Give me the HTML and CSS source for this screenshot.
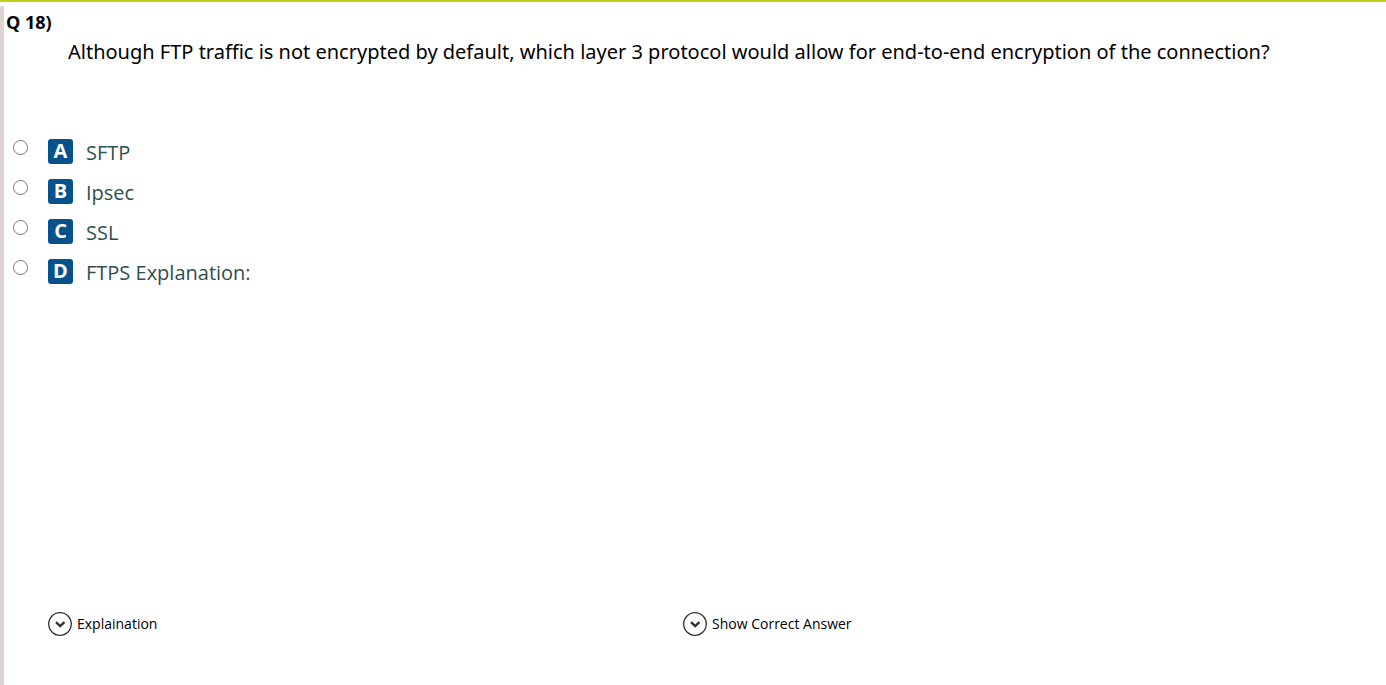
FILE: index.html
```
<!DOCTYPE html>
<html lang="en">
<head>
<meta charset="utf-8">
<meta name="viewport" content="width=device-width, initial-scale=1">
<title>Question 18</title>
<link rel="stylesheet" href="styles.css">
</head>
<body>
<main class="page">
  <form class="question">
    <h1 class="number">Q 18)</h1>
    <p class="prompt" id="prompt">Although FTP traffic is not encrypted by default, which layer 3 protocol would allow for end-to-end encryption of the connection?</p>
    <div class="options" role="radiogroup" aria-labelledby="prompt">
      <label class="option"><input class="radio" type="radio" name="answer" value="A"><span class="badge">A</span><span class="text">SFTP</span></label>
      <label class="option"><input class="radio" type="radio" name="answer" value="B"><span class="badge">B</span><span class="text">Ipsec</span></label>
      <label class="option"><input class="radio" type="radio" name="answer" value="C"><span class="badge">C</span><span class="text">SSL</span></label>
      <label class="option"><input class="radio" type="radio" name="answer" value="D"><span class="badge">D</span><span class="text">FTPS Explanation:</span></label>
    </div>
    <div class="actions">
      <button class="toggle" type="button"><svg class="icon" viewBox="0 0 24 24" aria-hidden="true"><circle cx="12" cy="12" r="11.3"/><path d="M8 10.2l4.2 4 4.2-4"/></svg>Explaination</button>
      <button class="toggle" type="button"><svg class="icon" viewBox="0 0 24 24" aria-hidden="true"><circle cx="12" cy="12" r="11.3"/><path d="M8 10.2l4.2 4 4.2-4"/></svg>Show Correct Answer</button>
    </div>
  </form>
</main>
</body>
</html>
```
FILE: styles.css
```
* {
  box-sizing: border-box;
}

body {
  margin: 0;
  background: #fff;
  color: #000;
  font-family: "Segoe UI", "Open Sans", "Noto Sans", sans-serif;
}

.page {
  display: flex;
  flex-direction: column;
  min-height: 100vh;
  padding-top: 4px;
  border-top: 2px solid #c1cf16;
}

.question {
  flex: 1;
  display: flex;
  flex-direction: column;
  border-left: 4px solid #dfd3d3;
}

.number {
  margin: 0;
  padding-left: 2px;
  font-size: 18px;
  line-height: 32px;
  font-weight: 700;
}

.prompt {
  margin: 0;
  padding: 0 64px;
  font-family: "Segoe UI", "Noto Sans", "Open Sans", sans-serif;
  font-size: 20px;
  line-height: 28px;
}

.options {
  display: grid;
  grid-auto-rows: 40px;
  justify-items: start;
  margin-top: 65px;
  padding-left: 9px;
}

.option {
  display: flex;
  align-items: center;
  color: #2f4f4f;
  font-size: 20px;
  line-height: 28px;
}

.text {
  padding-top: 3px;
}

.radio {
  appearance: none;
  width: 15px;
  height: 15px;
  margin: 0 20px 8px 0;
  border: 1px solid #767676;
  border-radius: 50%;
  background: #fff;
}

.radio:checked {
  border: 4px solid #0b5288;
}

.badge {
  width: 25px;
  height: 25px;
  margin-right: 13px;
  border-radius: 3px;
  background: #07528a;
  color: #fff;
  font-weight: 700;
  line-height: 24px;
  text-align: center;
}

.actions {
  display: grid;
  grid-template-columns: 1fr 1fr;
  justify-items: start;
  margin-top: auto;
  padding: 0 68px 48px 44px;
}

.toggle {
  display: flex;
  align-items: center;
  gap: 5px;
  padding: 0;
  border: 0;
  background: none;
  color: #000;
  font: inherit;
  font-size: 14px;
  line-height: 26px;
}

.icon {
  width: 24px;
  height: 24px;
  fill: none;
  stroke: #333;
  stroke-width: 1.3;
}

.icon path {
  stroke-width: 2.4;
}
```
